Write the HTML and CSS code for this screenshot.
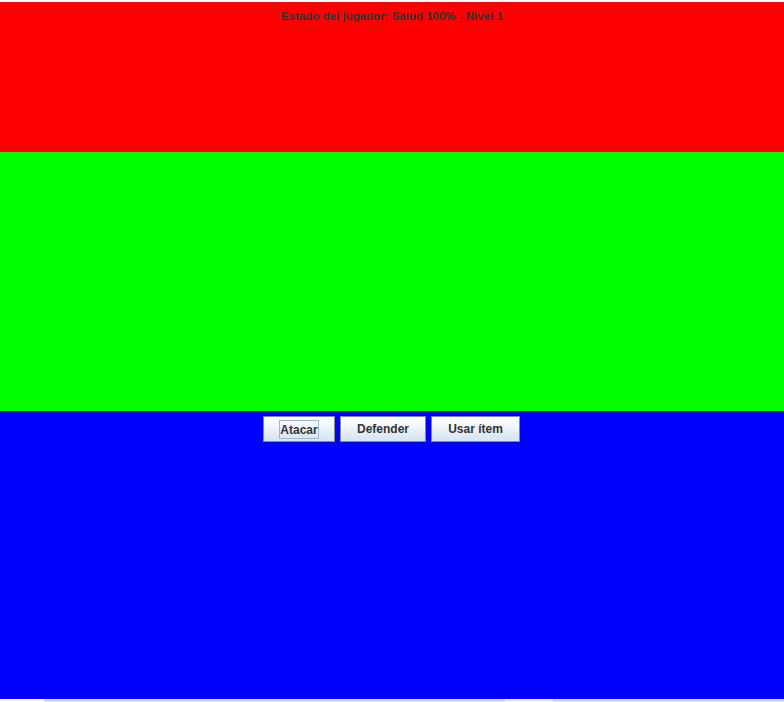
FILE: index.html
```html
<!DOCTYPE html>
<html lang="es">
<head>
<meta charset="utf-8">
<title>Juego</title>
<link rel="stylesheet" href="styles.css">
</head>
<body>
<div class="frame">
  <div class="panel panel-red">
    <div class="status">Estado del jugador: Salud 100% - Nivel 1</div>
  </div>
  <div class="panel panel-green"></div>
  <div class="panel panel-blue">
    <div class="actions">
      <button class="btn btn-attack"><span class="focus">Atacar</span></button>
      <button class="btn btn-defend">Defender</button>
      <button class="btn btn-item">Usar ítem</button>
    </div>
  </div>
  <div class="strip">
    <div class="seg seg-white"></div>
    <div class="seg seg-lav seg-a"></div>
    <div class="seg seg-light"></div>
    <div class="seg seg-lav seg-b"></div>
  </div>
</div>
</body>
</html>
```
FILE: styles.css
```css
html, body {
  margin: 0;
  padding: 0;
  background: #ffffff;
}
.frame {
  width: 784px;
  height: 702px;
  padding-top: 2px;
  box-sizing: border-box;
  display: flex;
  flex-direction: column;
  font-family: "Liberation Sans", Arial, sans-serif;
}
.panel {
  width: 100%;
}
.panel-red {
  background: #ff0000;
  height: 150px;
}
.panel-green {
  background: #00ff00;
  height: 259px;
}
.panel-blue {
  background: #0000ff;
  height: 288px;
}
.status {
  text-align: center;
  font-size: 11.5px;
  font-weight: bold;
  line-height: 16px;
  padding-top: 6px;
  color: #333333;
}
.actions {
  display: flex;
  justify-content: center;
  gap: 5px;
  padding-top: 5px;
  padding-right: 1px;
}
.btn {
  height: 26px;
  margin: 0;
  padding: 0;
  border: 1px solid #7a8a99;
  border-radius: 0;
  background: linear-gradient(to bottom, #ffffff 0%, #f3f7fb 35%, #dde8f3 80%, #d8e4f0 100%);
  font-family: "Liberation Sans", Arial, sans-serif;
  font-size: 12px;
  font-weight: bold;
  color: #333333;
  display: flex;
  align-items: center;
  justify-content: center;
}
.btn-attack { width: 72px; }
.btn-defend { width: 86px; }
.btn-item { width: 89px; }
.focus {
  border: 1px solid #a3b8cc;
  padding: 2px 0 1px 0;
  line-height: 14px;
}
.strip {
  display: flex;
  height: 3px;
}
.seg { height: 3px; }
.seg-white { width: 44px; background: #ffffff; }
.seg-lav { background: #d8d8ee; }
.seg-a { width: 461px; }
.seg-light { width: 48px; background: #eeeefa; }
.seg-b { flex: 1; }
```
